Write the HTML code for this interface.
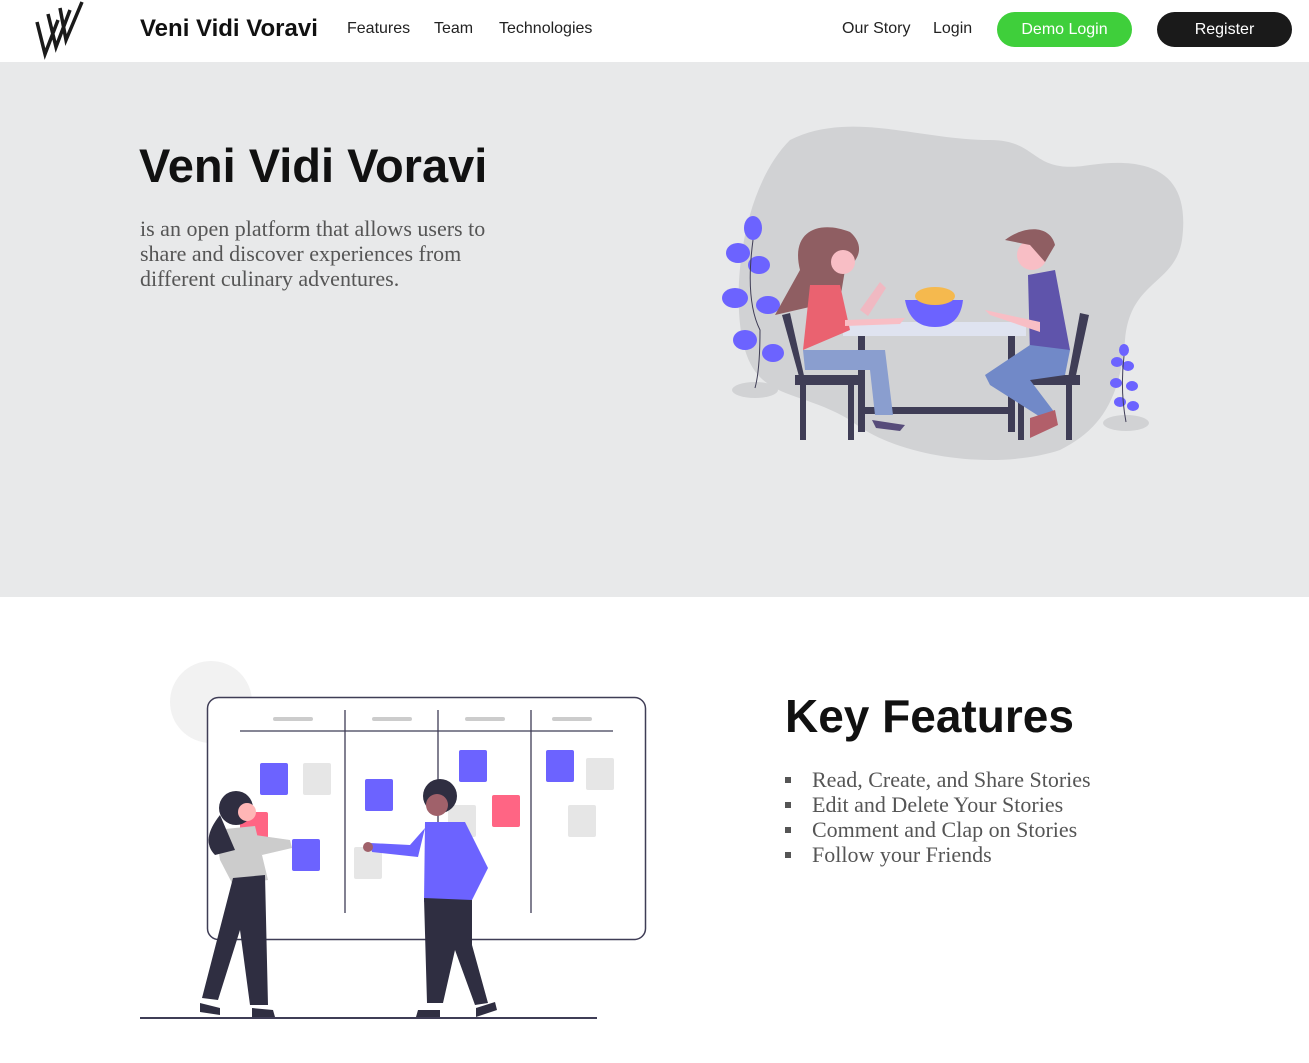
<!DOCTYPE html>
<html><head><meta charset="utf-8"><style>
*{margin:0;padding:0;box-sizing:border-box}
body{width:1309px;height:1063px;position:relative;background:#fff;font-family:"Liberation Sans",Arial,sans-serif;overflow:hidden}
.hero{position:absolute;left:0;top:62px;width:1309px;height:535px;background:#e8e9ea}
.t{position:absolute;white-space:nowrap}
.nav{font-size:16px;color:#222;top:20px}
.btn{position:absolute;top:12px;height:35px;border-radius:18px;font-size:16px;color:#fff;text-align:center;line-height:35px}
.serif{font-family:"Liberation Serif",serif;color:#555;font-size:22px;line-height:25px}
ul{position:absolute;left:785px;top:767px;list-style:none;font-family:"Liberation Serif",serif;color:#555;font-size:22px;line-height:25px}
li{padding-left:27px;position:relative}
li:before{content:"";position:absolute;left:0;top:10px;width:6px;height:6px;background:#555}
</style></head><body>
<div class="hero"></div>
<svg style="position:absolute;left:0;top:0" width="1309" height="1063">
<g fill="none" stroke="#1a1a1a" stroke-width="3.5"><path d="M37 22 L45 54 L58 20 M48 14 L56 47 L70 10 M60 8 L66 40 L82 2"/></g>
<path d="M790 140 C850 110 920 140 990 140 C1040 140 1030 175 1090 165 C1160 155 1190 180 1182 240 C1175 285 1130 280 1125 340 C1120 400 1100 430 1060 450 C1000 470 900 460 850 420 C800 390 760 400 745 350 C730 300 740 190 790 140Z" fill="#d1d2d4"/>
<ellipse cx="755" cy="390" rx="23" ry="8" fill="#d1d2d4"/><ellipse cx="1126" cy="423" rx="23" ry="8" fill="#d1d2d4"/>
<g fill="#6c63ff"><ellipse cx="753" cy="228" rx="9" ry="12"/><ellipse cx="738" cy="253" rx="12" ry="10"/><ellipse cx="759" cy="265" rx="11" ry="9"/><ellipse cx="735" cy="298" rx="13" ry="10"/><ellipse cx="768" cy="305" rx="12" ry="9"/><ellipse cx="745" cy="340" rx="12" ry="10"/><ellipse cx="773" cy="353" rx="11" ry="9"/>
<ellipse cx="1124" cy="350" rx="5" ry="6"/><ellipse cx="1117" cy="362" rx="6" ry="5"/><ellipse cx="1128" cy="366" rx="6" ry="5"/><ellipse cx="1116" cy="383" rx="6" ry="5"/><ellipse cx="1132" cy="386" rx="6" ry="5"/><ellipse cx="1120" cy="402" rx="6" ry="5"/><ellipse cx="1133" cy="406" rx="6" ry="5"/></g>
<path d="M753 240 Q745 300 760 330 Q760 370 755 388" stroke="#3f3d56" fill="none"/><path d="M1124 356 Q1120 390 1126 422" stroke="#3f3d56" fill="none"/>
<rect x="843" y="322" width="183" height="14" fill="#dfe3f0"/>
<g fill="#3f3d56"><rect x="858" y="336" width="7" height="96"/><rect x="1008" y="336" width="7" height="96"/><rect x="860" y="407" width="150" height="7"/>
<path d="M782 315 L790 313 L805 380 L800 380Z"/><rect x="795" y="375" width="65" height="10"/><rect x="800" y="385" width="6" height="55"/><rect x="848" y="385" width="6" height="55"/>
<path d="M1080 313 L1089 315 L1075 380 L1068 378Z"/><rect x="1015" y="375" width="65" height="10"/><rect x="1018" y="385" width="6" height="55"/><rect x="1066" y="385" width="6" height="55"/></g>
<path d="M800 270 C790 230 820 220 850 232 C865 245 860 260 845 270 L840 300 L775 315Z" fill="#8f5e62"/>
<circle cx="843" cy="262" r="12" fill="#f8bec5"/>
<path d="M810 285 L840 285 L850 330 L803 350Z" fill="#ea6270"/>
<path d="M803 350 L885 350 L893 415 L875 415 L870 370 L805 370Z" fill="#8a9ecf"/>
<path d="M845 320 L905 318 L900 324 L845 326Z" fill="#f8bec5"/><path d="M860 310 L880 282 L886 288 L868 316Z" fill="#f0b9c2"/>
<path d="M905 300 L963 300 Q960 327 935 327 Q910 327 905 300Z" fill="#6c63ff"/>
<ellipse cx="935" cy="296" rx="20" ry="9" fill="#f5b94e"/>
<path d="M872 420 L905 425 L900 431 L876 428Z" fill="#574c7a"/>
<circle cx="1032" cy="255" r="15" fill="#f8bec5"/><path d="M1005 240 C1025 225 1050 225 1055 245 L1045 262 L1030 245Z" fill="#8f5e62"/>
<path d="M1028 275 L1055 270 L1070 350 L1030 355Z" fill="#5f54ab"/>
<path d="M985 310 L1040 322 L1040 332 L990 315Z" fill="#f8bec5"/>
<path d="M985 375 L1030 345 L1070 350 L1065 375 L1030 380 L1055 413 L1045 420 L990 385Z" fill="#7189c8"/>
<path d="M1030 418 L1055 410 L1058 425 L1030 438Z" fill="#b25f6a"/>
<circle cx="211" cy="702" r="41" fill="#f2f2f2"/>
<rect x="207.5" y="697.5" width="438" height="242" rx="11" fill="#fff" stroke="#3f3d56" stroke-width="1.5"/>
<g stroke="#3f3d56" stroke-width="1.3"><line x1="240" y1="731" x2="613" y2="731"/><line x1="345" y1="710" x2="345" y2="913"/><line x1="438" y1="710" x2="438" y2="913"/><line x1="531" y1="710" x2="531" y2="913"/><line x1="140" y1="1018" x2="597" y2="1018" stroke-width="2"/></g>
<g fill="#ccc"><rect x="273" y="717" width="40" height="4" rx="2"/><rect x="372" y="717" width="40" height="4" rx="2"/><rect x="465" y="717" width="40" height="4" rx="2"/><rect x="552" y="717" width="40" height="4" rx="2"/></g>
<g fill="#e6e6e6"><rect x="303" y="763" width="28" height="32" rx="2"/><rect x="354" y="847" width="28" height="32" rx="2"/><rect x="448" y="805" width="28" height="32" rx="2"/><rect x="586" y="758" width="28" height="32" rx="2"/><rect x="568" y="805" width="28" height="32" rx="2"/></g>
<g fill="#6c63ff"><rect x="260" y="763" width="28" height="32" rx="2"/><rect x="365" y="779" width="28" height="32" rx="2"/><rect x="459" y="750" width="28" height="32" rx="2"/><rect x="546" y="750" width="28" height="32" rx="2"/><rect x="292" y="839" width="28" height="32" rx="2"/></g>
<g fill="#ff6584"><rect x="240" y="812" width="28" height="32" rx="2"/><rect x="492" y="795" width="28" height="32" rx="2"/></g>
<path d="M215 830 L255 826 L268 880 L233 885 L220 860Z" fill="#ccc"/><path d="M255 835 L290 840 L292 848 L262 855Z" fill="#ccc"/>
<circle cx="236" cy="808" r="17" fill="#2f2e41"/><path d="M220 815 Q200 840 215 855 L235 850Z" fill="#2f2e41"/><circle cx="247" cy="812" r="9" fill="#ffb6b6"/>
<path d="M233 878 L265 875 L268 1005 L250 1005 L240 930 L218 1000 L202 998 Z" fill="#2f2e41"/>
<path d="M200 1003 L220 1008 L220 1015 L200 1012Z M252 1008 L273 1010 L275 1017 L252 1017Z" fill="#2f2e41"/>
<circle cx="440" cy="796" r="17" fill="#2f2e41"/><circle cx="437" cy="805" r="11" fill="#a0616a"/>
<path d="M425 822 L465 822 L488 868 L472 900 L424 902 Z" fill="#6c63ff"/><path d="M425 828 L410 845 L370 843 L372 852 L418 857 Z" fill="#6c63ff"/><circle cx="368" cy="847" r="5" fill="#a0616a"/>
<path d="M424 898 L472 900 L472 945 L488 1003 L475 1005 L455 950 L443 1003 L427 1003Z" fill="#2f2e41"/>
<path d="M418 1010 L440 1010 L440 1017 L416 1017Z M476 1008 L495 1002 L497 1010 L476 1017Z" fill="#2f2e41"/>
</svg>
<div class="t" style="left:140px;top:15px;font-size:24px;font-weight:bold;color:#111">Veni Vidi Voravi</div>
<div class="t nav" style="left:347px">Features</div>
<div class="t nav" style="left:434px">Team</div>
<div class="t nav" style="left:499px">Technologies</div>
<div class="t nav" style="left:842px">Our Story</div>
<div class="t nav" style="left:933px">Login</div>
<div class="btn" style="left:997px;width:135px;background:#3fcf3b">Demo Login</div>
<div class="btn" style="left:1157px;width:135px;background:#1a1a1a">Register</div>
<div class="t" style="left:139px;top:138px;font-size:47px;font-weight:bold;color:#111">Veni Vidi Voravi</div>
<div class="t serif" style="left:140px;top:216px">is an open platform that allows users to<br>share and discover experiences from<br>different culinary adventures.</div>
<div class="t" style="left:785px;top:689px;font-size:46px;font-weight:bold;color:#111">Key Features</div>
<ul><li>Read, Create, and Share Stories</li><li>Edit and Delete Your Stories</li><li>Comment and Clap on Stories</li><li>Follow your Friends</li></ul>
</body></html>
